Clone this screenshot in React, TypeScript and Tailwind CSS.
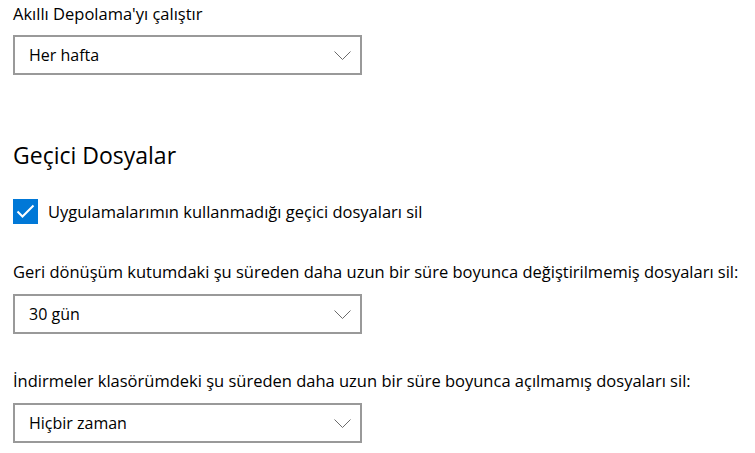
import React from 'react';

const Chevron = () => (
    <svg width="17" height="9" viewBox="0 0 17 9" fill="none" className="shrink-0">
        <path d="M0.5 0.5 L8.5 8.5 L16.5 0.5" stroke="#6b6b6b" strokeWidth="1" />
    </svg>
);

const Dropdown = ({ value, className }: { value: string; className?: string }) => (
    <div className={`w-[349px] h-[40px] border-2 border-[#999999] bg-white flex items-center justify-between pl-[14px] pr-[9px] ${className ?? ''}`}>
        <span className="text-[16px] leading-[20px]">{value}</span>
        <Chevron />
    </div>
);

const App: React.FC = () => {
    return (
        <div className="w-[755px] h-[453px] overflow-hidden bg-white text-black pl-[13px] font-['Segoe_UI','Open_Sans',sans-serif]">
            <div className="pt-[4px] text-[16.5px] leading-[20px]">Akıllı Depolama'yı çalıştır</div>
            <Dropdown value="Her hafta" className="mt-[11px]" />

            <h2 className="mt-[66px] text-[23px] leading-[28px] font-normal">Geçici Dosyalar</h2>

            <div className="mt-[30px] flex items-center gap-[10px]">
                <div className="w-[25px] h-[25px] bg-[#0078d7] flex items-center justify-center">
                    <svg width="19" height="15" viewBox="0 0 19 15" fill="none">
                        <path d="M1.5 7.5 L6.5 12.5 L17.5 1.5" stroke="white" strokeWidth="2" />
                    </svg>
                </div>
                <span className="text-[16.5px] leading-[20px]">Uygulamalarımın kullanmadığı geçici dosyaları sil</span>
            </div>

            <div className="mt-[38px] text-[16.5px] leading-[20px]">
                Geri dönüşüm kutumdaki şu süreden daha uzun bir süre boyunca değiştirilmemiş dosyaları sil:
            </div>
            <Dropdown value="30 gün" className="mt-[12px]" />

            <div className="mt-[37px] text-[16.5px] leading-[20px]">
                İndirmeler klasörümdeki şu süreden daha uzun bir süre boyunca açılmamış dosyaları sil:
            </div>
            <Dropdown value="Hiçbir zaman" className="mt-[12px]" />
        </div>
    );
};

export default App;
